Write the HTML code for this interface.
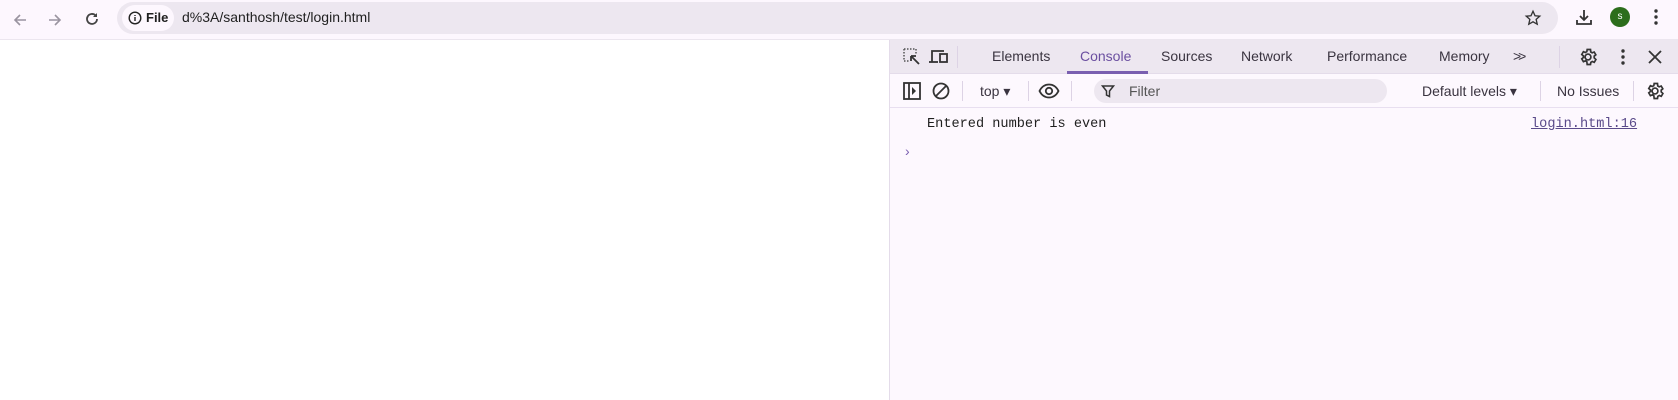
<!DOCTYPE html>
<html><head><meta charset="utf-8"><style>
*{box-sizing:border-box;margin:0;padding:0}
body{width:1678px;height:400px;overflow:hidden;background:#fff;font-family:"Liberation Sans",Arial,sans-serif;position:relative;color:#1f1f1f}
.a{position:absolute}
#top{left:0;top:0;width:1678px;height:40px;background:#fdf7fe;border-bottom:1px solid #ece6ef}
#pill{left:117px;top:2px;width:1441px;height:32px;border-radius:16px;background:#ede7f0}
#chip{left:122px;top:5px;width:52px;height:26px;border-radius:13px;background:#fdf7fe;font-size:13px;font-weight:bold;line-height:26px;padding-left:24px}
#url{left:182px;top:9px;font-size:14px;color:#1f1f1f}
#dt{left:889px;top:40px;width:789px;height:360px;background:#fdf8fe;border-left:1px solid #e4dcea}
#tabs{left:0;top:0;width:789px;height:34px;background:#ede7f0;border-bottom:1px solid #e4dcea}
.t{position:absolute;top:8px;font-size:14px;color:#3a3440}
#tb{left:0;top:34px;width:789px;height:34px;border-bottom:1px solid #e8dff0}
.f{position:absolute;font-size:14px;color:#3a3440}
.sep{position:absolute;width:1px;height:20px;background:#ddd3e5}
.mono{font-family:"Liberation Mono",monospace;font-size:13.6px}
</style></head><body>
<div id="top" class="a">
<svg class="a" style="left:10px;top:10px" width="20" height="20" viewBox="0 0 20 20"><path d="M16 10H5M10 5l-5 5 5 5" stroke="#9a94a0" stroke-width="1.6" fill="none"/></svg>
<svg class="a" style="left:45px;top:10px" width="20" height="20" viewBox="0 0 20 20"><path d="M4 10h11M10 5l5 5-5 5" stroke="#9a94a0" stroke-width="1.6" fill="none"/></svg>
<svg class="a" style="left:82px;top:9px" width="20" height="20" viewBox="0 0 20 20"><path d="M15 10a5 5 0 1 1-1.5-3.6" stroke="#444" stroke-width="1.8" fill="none"/><path d="M15 4v4h-4z" fill="#444"/></svg>
<div id="pill" class="a"></div>
<div id="chip" class="a">File</div>
<svg class="a" style="left:128px;top:11px" width="14" height="14" viewBox="0 0 14 14"><circle cx="7" cy="7" r="5.8" stroke="#222" stroke-width="1.4" fill="none"/><path d="M7 6v4M7 4v1" stroke="#222" stroke-width="1.4"/></svg>
<div id="url" class="a">d%3A/santhosh/test/login.html</div>
<svg class="a" style="left:1524px;top:9px" width="18" height="18" viewBox="0 0 24 24"><path d="M12 3l2.7 6 6.3.6-4.8 4.3 1.4 6.3L12 17l-5.6 3.2 1.4-6.3L3 9.6 9.3 9z" stroke="#333" stroke-width="1.8" fill="none"/></svg>
<svg class="a" style="left:1574px;top:7px" width="20" height="20" viewBox="0 0 20 20"><path d="M10 3v10M6 9l4 4 4-4M3 13v4h14v-4" stroke="#333" stroke-width="1.8" fill="none"/></svg>
<div class="a" style="left:1610px;top:7px;width:20px;height:20px;border-radius:50%;background:#2c6e1c;color:#fff;font-size:10px;text-align:center;line-height:20px">s</div>
<svg class="a" style="left:1650px;top:7px" width="12" height="20" viewBox="0 0 12 20"><circle cx="6" cy="4" r="1.7" fill="#333"/><circle cx="6" cy="10" r="1.7" fill="#333"/><circle cx="6" cy="16" r="1.7" fill="#333"/></svg>
</div>
<div id="dt" class="a">
<div id="tabs" class="a">
<svg class="a" style="left:12px;top:7px" width="20" height="20" viewBox="0 0 20 20"><path d="M2 2h12v5M2 2v12h5" stroke="#555" stroke-width="1.5" stroke-dasharray="1.5 1.5" fill="none"/><path d="M9 9l8 8M9 9h5M9 9v5" stroke="#333" stroke-width="1.8" fill="none"/></svg>
<svg class="a" style="left:38px;top:7px" width="22" height="20" viewBox="0 0 22 20"><path d="M4 15V4h12" stroke="#333" stroke-width="1.8" fill="none"/><path d="M1 15h9" stroke="#333" stroke-width="1.8"/><rect x="12" y="7" width="7" height="8" stroke="#333" stroke-width="1.8" fill="none"/></svg>
<div class="a" style="left:67px;top:6px;width:1px;height:22px;background:#ddd3e5"></div>
<span class="t" style="left:102px">Elements</span>
<span class="t" style="left:190px;color:#6b4fa0">Console</span>
<div class="a" style="left:177px;top:31px;width:81px;height:3px;background:#7a5fb0"></div>
<span class="t" style="left:271px">Sources</span>
<span class="t" style="left:351px">Network</span>
<span class="t" style="left:437px">Performance</span>
<span class="t" style="left:549px">Memory</span>
<span class="t" style="left:623px;letter-spacing:-3px">&gt;&gt;</span>
<div class="a" style="left:669px;top:6px;width:1px;height:22px;background:#ddd3e5"></div>
<svg class="a" style="left:688px;top:7px" width="20" height="20" viewBox="0 0 24 24"><path d="M12 8.5a3.5 3.5 0 1 0 0 7 3.5 3.5 0 0 0 0-7zM19.4 13a7.5 7.5 0 0 0 0-2l2-1.6-2-3.4-2.4 1a7 7 0 0 0-1.7-1L15 3h-4l-.4 2.6a7 7 0 0 0-1.7 1l-2.4-1-2 3.4 2 1.6a7.5 7.5 0 0 0 0 2l-2 1.6 2 3.4 2.4-1a7 7 0 0 0 1.7 1L11 21h4l.4-2.6a7 7 0 0 0 1.7-1l2.4 1 2-3.4z" stroke="#333" stroke-width="2" fill="none"/></svg>
<svg class="a" style="left:728px;top:7px" width="10" height="20" viewBox="0 0 10 20"><circle cx="5" cy="4" r="1.7" fill="#333"/><circle cx="5" cy="10" r="1.7" fill="#333"/><circle cx="5" cy="16" r="1.7" fill="#333"/></svg>
<svg class="a" style="left:757px;top:9px" width="16" height="16" viewBox="0 0 16 16"><path d="M2 2l12 12M14 2L2 14" stroke="#333" stroke-width="1.8"/></svg>
</div>
<div id="tb" class="a">
<svg class="a" style="left:12px;top:7px" width="20" height="20" viewBox="0 0 20 20"><rect x="2" y="2" width="16" height="16" stroke="#333" stroke-width="1.8" fill="none"/><path d="M7 2v16" stroke="#333" stroke-width="1.8"/><path d="M10 6l4 4-4 4z" fill="#333"/></svg>
<svg class="a" style="left:41px;top:7px" width="20" height="20" viewBox="0 0 20 20"><circle cx="10" cy="10" r="7.5" stroke="#333" stroke-width="1.8" fill="none"/><path d="M5 15L15 5" stroke="#333" stroke-width="1.8"/></svg>
<div class="sep" style="left:72px;top:7px"></div>
<span class="f" style="left:90px;top:9px">top ▾</span>
<div class="sep" style="left:138px;top:7px"></div>
<svg class="a" style="left:148px;top:7px" width="22" height="20" viewBox="0 0 22 20"><path d="M1.5 10C4 5 8 3.5 11 3.5S18 5 20.5 10C18 15 14 16.5 11 16.5S4 15 1.5 10z" stroke="#333" stroke-width="1.8" fill="none"/><circle cx="11" cy="10" r="3.2" stroke="#333" stroke-width="1.8" fill="none"/></svg>
<div class="sep" style="left:181px;top:7px"></div>
<div class="a" style="left:204px;top:5px;width:293px;height:24px;border-radius:12px;background:#ede7f0"></div>
<svg class="a" style="left:211px;top:10px" width="14" height="14" viewBox="0 0 14 14"><path d="M1.5 2h11L8.5 7v5.5L5.5 11V7z" stroke="#333" stroke-width="1.5" fill="none"/></svg>
<span class="f" style="left:239px;top:9px;color:#555">Filter</span>
<span class="f" style="left:532px;top:9px">Default levels ▾</span>
<div class="sep" style="left:650px;top:7px"></div>
<span class="f" style="left:667px;top:9px">No Issues</span>
<div class="sep" style="left:743px;top:7px"></div>
<svg class="a" style="left:755px;top:7px" width="20" height="20" viewBox="0 0 24 24"><path d="M12 8.5a3.5 3.5 0 1 0 0 7 3.5 3.5 0 0 0 0-7zM19.4 13a7.5 7.5 0 0 0 0-2l2-1.6-2-3.4-2.4 1a7 7 0 0 0-1.7-1L15 3h-4l-.4 2.6a7 7 0 0 0-1.7 1l-2.4-1-2 3.4 2 1.6a7.5 7.5 0 0 0 0 2l-2 1.6 2 3.4 2.4-1a7 7 0 0 0 1.7 1L11 21h4l.4-2.6a7 7 0 0 0 1.7-1l2.4 1 2-3.4z" stroke="#333" stroke-width="2" fill="none"/></svg>
</div>
<span class="a mono" style="left:37px;top:77px;color:#1f1f1f">Entered number is even</span>
<span class="a mono" style="left:641px;top:77px;color:#5a4a8a;text-decoration:underline">login.html:16</span>
<span class="a" style="left:15px;top:103px;font-size:14px;color:#7a5fb0">›</span>
</div>
</body></html>
